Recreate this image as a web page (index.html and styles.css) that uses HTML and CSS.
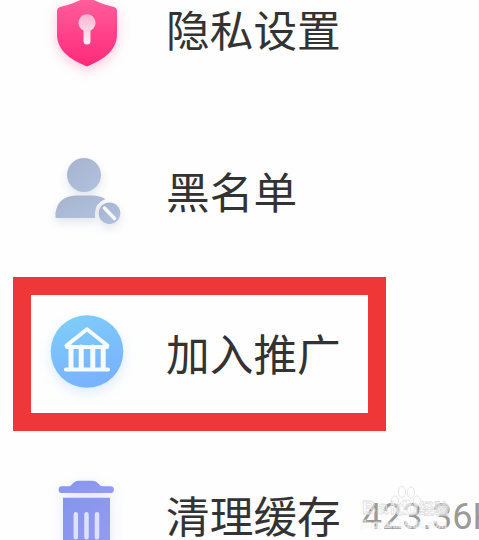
FILE: index.html
```html
<!DOCTYPE html>
<html lang="zh-CN">
<head>
<meta charset="utf-8">
<title>设置</title>
<link rel="stylesheet" href="styles.css">
</head>
<body>
<main class="list">
  <div class="row">
    <svg class="icon pink" viewBox="0 0 100 100">
      <defs><linearGradient id="p" x1="0" y1="0" x2="0" y2="1"><stop offset="0" stop-color="#ff609d"/><stop offset="1" stop-color="#ff297a"/></linearGradient>
      <linearGradient id="k" x1="0" y1="0" x2="0" y2="1"><stop offset="0" stop-color="#ffb5d2"/><stop offset="1" stop-color="#fff0f6"/></linearGradient></defs>
      <path fill="url(#p)" d="M47 14.500Q34 22 20 25Q17 26 17 29V52C17 68 29 77 47 84.500C65 77 77 68 77 52V29Q77 26 74 25Q60 22 47 14.500Z"/>
      <path fill="url(#k)" d="M43.500 48.500A8.500 8.500 0 1 1 50.500 48.500V59a3.500 3.500 0 0 1-7 0Z"/>
    </svg>
    <span class="label">隐私设置</span>
  </div>
  <div class="row">
    <svg class="icon gray" viewBox="0 0 100 100">
      <defs><linearGradient id="g" x1="0" y1="0" x2="1" y2="1"><stop offset="0" stop-color="#a7b3cc"/><stop offset="1" stop-color="#b0c2e0"/></linearGradient></defs>
      <circle cx="44" cy="31" r="17" fill="url(#g)"/>
      <path fill="url(#g)" d="M15.500 73V69Q18 52 36 51.500H52Q60 51.500 65.500 55Q55 59 55 69V74H17Q15.500 74 15.500 73Z"/>
      <circle cx="69.500" cy="69.200" r="10.800" fill="url(#g)"/>
      <path d="M64.500 64L74.500 74.500" stroke="#f7f9fc" stroke-width="3.400" stroke-linecap="round"/>
    </svg>
    <span class="label">黑名单</span>
  </div>
  <div class="row highlighted">
    <svg class="icon blue" viewBox="0 0 100 100">
      <defs><linearGradient id="b" x1="0" y1="0" x2="0.300" y2="1"><stop offset="0" stop-color="#7fcff8"/><stop offset="1" stop-color="#78b3ff"/></linearGradient></defs>
      <circle cx="47" cy="45.500" r="36.300" fill="url(#b)"/>
      <g fill="none" stroke="#f5fbff" stroke-linecap="round" stroke-linejoin="round">
        <path stroke-width="4" d="M26.500 39.500L47 23.300L67.500 39.500"/>
        <path stroke-width="4.200" d="M27 41H67M26 63.500H68"/>
        <path stroke-width="5" d="M31 41V62M41.200 41V62M52.800 41V62M63.200 41V62"/>
      </g>
    </svg>
    <span class="label">加入推广</span>
  </div>
  <div class="row">
    <svg class="icon violet" viewBox="0 -4.300 100 100">
      <defs><linearGradient id="v" x1="0" y1="0" x2="1" y2="1"><stop offset="0" stop-color="#8495ed"/><stop offset="1" stop-color="#969bf2"/></linearGradient></defs>
      <path fill="url(#v)" d="M22 14H28Q31 14 33 11Q35 8.500 38 8.500H53Q56 8.500 58 11Q60 14 63 14H70.500a3.400 3.400 0 0 1 0 6.800H22a3.400 3.400 0 0 1 0-6.800Z"/>
      <path fill="url(#v)" d="M23 25.500H70V77H23Z"/>
      <path d="M35.800 42V65M46.500 42V65M57 42V65" stroke="#dde1fb" stroke-width="4.500" stroke-linecap="round"/>
    </svg>
    <span class="label">清理缓存</span>
    <span class="size">423.36K</span>
    <svg class="watermark" viewBox="0 0 95 48">
      <g class="mark">
        <text x="2" y="30" font-size="19" textLength="33">Bai</text>
        <text x="36" y="30" font-size="19" textLength="22">du</text>
        <text x="59" y="30" font-size="15">经验</text>
        <text class="url" x="1" y="44" font-size="10" textLength="86">jingyan.baidu.com</text>
        <ellipse cx="35" cy="17" rx="3.500" ry="5"/><ellipse cx="42" cy="8" rx="3.700" ry="5.500"/><ellipse cx="51" cy="8.500" rx="3.700" ry="5.500"/><ellipse cx="57" cy="17" rx="3.500" ry="5"/>
        <path d="M46 16C41 16 40 21 37 24C34 28 37 32 41 31Q46 30 51 31C57 31 58 27 54 23C51 20 51 16 46 16Z"/>
      </g>
    </svg>
  </div>
</main>
</body>
</html>
```
FILE: styles.css
```css
*, *::after { box-sizing: border-box; }
body {
  margin: 0;
  height: 540px;
  overflow: hidden;
  background: #fefefe;
  font-family: Roboto, "Noto Sans CJK SC", sans-serif;
}
.list {
  width: 479px;
  height: 589px;
  margin-top: -49px;
  overflow: hidden;
}
.row {
  position: relative;
  display: flex;
  align-items: center;
  height: 162px;
  padding-left: 40px;
}
.icon {
  flex: none;
  width: 100px;
  height: 100px;
  overflow: visible;
}
.pink { filter: drop-shadow(0 4px 6px #ff297a40); }
.gray { filter: drop-shadow(0 4px 5px #8494b53d); }
.blue { filter: drop-shadow(0 5px 6px #78b3ff40); }
.violet { filter: drop-shadow(0 3px 6px #858eea38); }
.label {
  margin-left: 26px;
  padding-bottom: 8px;
  color: #333;
  font: 43.7px/64px "Noto Sans CJK SC", sans-serif;
  white-space: nowrap;
}
.size {
  margin-left: 21px;
  padding-bottom: 2px;
  color: #999;
  font-size: 36px;
  line-height: 44px;
  white-space: nowrap;
}
.highlighted::after {
  content: "";
  position: absolute;
  left: 13px;
  top: 1.500px;
  width: 373px;
  height: 154.500px;
  border: 18px solid #ef3737;
}
.watermark {
  position: absolute;
  left: 360px;
  top: 47px;
  width: 95px;
  height: 48px;
}
.mark {
  fill: #ffffff50;
  stroke: #dedede;
  stroke-width: 0.800;
  font-family: "Liberation Sans", "Noto Sans CJK SC", sans-serif;
  font-weight: bold;
}
.url {
  fill: #ffffff90;
  stroke: #eeeeee;
  stroke-width: 0.300;
}
```
